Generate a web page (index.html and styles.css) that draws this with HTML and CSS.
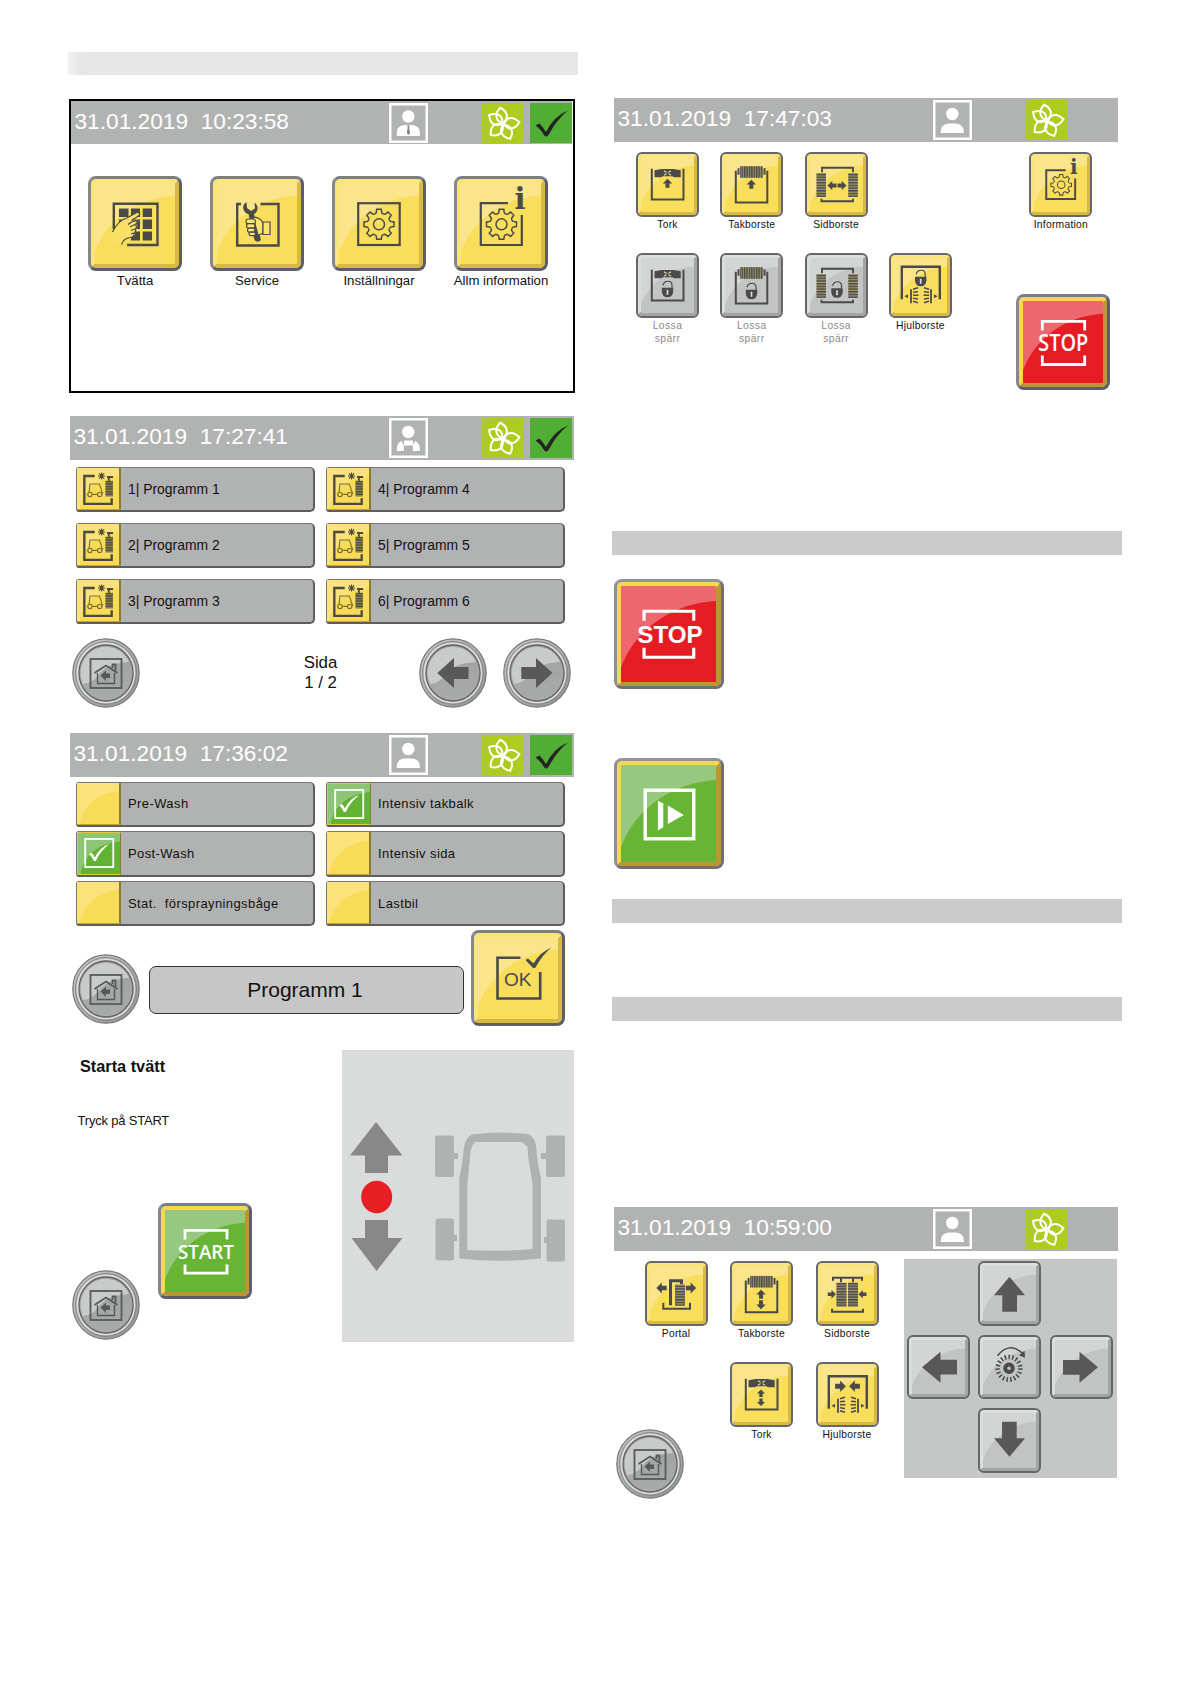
FILE: index.html
```html
<!DOCTYPE html>
<html lang="sv">
<head>
<meta charset="utf-8">
<title>Tvättanläggning</title>
<link rel="stylesheet" href="styles.css">
</head>
<body>
<svg class="defs" width="0" height="0" aria-hidden="true">
  <defs>
    <linearGradient id="ring" x1="0" y1="0" x2="1" y2="1">
      <stop offset="0" stop-color="#c9cac9"/><stop offset=".5" stop-color="#aeb0af"/><stop offset="1" stop-color="#8f9190"/>
    </linearGradient>
    <linearGradient id="disc" x1="0" y1="0" x2="0" y2="1">
      <stop offset="0" stop-color="#9fa19f"/><stop offset="1" stop-color="#a9abaa"/>
    </linearGradient>
    <pattern id="rows" width="10" height="2.700" patternUnits="userSpaceOnUse"><rect width="10" height="1.500" fill="#4a4a4a"/></pattern>
    <pattern id="cols" width="2.400" height="20" patternUnits="userSpaceOnUse"><rect width="1.350" height="20" fill="#4a4a4a"/></pattern>
  </defs>
  <symbol id="user" viewBox="0 0 39 40"><circle cx="19.300" cy="14" r="6.200" fill="#fff"/><path d="M7.800 33v-2q.5-7 8-7.500h7q7.500 .5 8 7.500v2z" fill="#fff"/></symbol>
  <symbol id="user-tie" viewBox="0 0 39 40"><circle cx="19.300" cy="13.500" r="6.200" fill="#fff"/><path d="M7.800 33v-3q0-7 7-8h9q7 1 7 8v3z" fill="#fff"/><path d="M18 22.500h2.800l-.7 2 1 5.500-1.600 2-1.700-2 .9-5.500z" fill="#858786"/></symbol>
  <symbol id="user-overall" viewBox="0 0 39 40"><circle cx="19.300" cy="14" r="6.200" fill="#fff"/><path d="M7.800 33v-3q.5-5 4.500-7l2.500 4v6zM30.800 33v-3q-.5-5-4.500-7l-2.500 4v6zM15 22.500h9v5h-9z" fill="#fff"/></symbol>
  <symbol id="petal" overflow="visible"><path d="M0-1C-8-5-6-12 0-16.500 6-12 8-5 0-1Z" fill="none" stroke="#fff" stroke-width="2"/></symbol>
  <symbol id="flower" viewBox="0 0 42 40">
    <g transform="translate(21 21)"><use href="#petal" transform="rotate(-10)"/><use href="#petal" transform="rotate(84)"/><use href="#petal" transform="rotate(154)"/><use href="#petal" transform="rotate(228)"/><use href="#petal" transform="rotate(303)"/><circle r="2.500" fill="#fff"/></g>
  </symbol>
  <symbol id="tick" viewBox="0 0 42 40"><path d="M5.500 22.500 9.500 20.500q3.500 3.500 6.500 8.500Q24 13 38 7.500 27 16 18.500 32q-2.500 3-4.500 0Q10 25.500 5.500 22.500Z" fill="#242424"/></symbol>
  <symbol id="program" viewBox="0 0 43 44"><g fill="none" stroke="#4a4a40" stroke-width="2.500"><path d="M18 8.500H7V38h29v-6"/><path d="M31 9.500h6.500M33 10v4" stroke-width="2"/><path d="M12 26l1-9h10l3.500 10.500M16 28h5" stroke="#77702f" stroke-width="1.200"/><g stroke="#77702f" stroke-width="1.300"><circle cx="13" cy="28" r="2.300"/><circle cx="23.300" cy="28" r="2.300"/></g><path d="M25.300 4.700v7.600M21.500 8.500h7.600M22.600 5.800l5.400 5.400M28 5.800l-5.400 5.400" stroke-width="1.200"/></g><path d="M29.500 13.500h7.800V30h-7.800z" fill="#8f8638"/><path d="M29.500 13.500h7.800V30h-7.800z" fill="url(#rows)"/></symbol>
  <symbol id="checked" viewBox="0 0 43 44"><rect x="6.500" y="6.500" width="30.500" height="30.500" fill="none" stroke="#fff" stroke-width="2"/><path d="M11 23l2.500-1.500q2 2 3.500 5Q23 15 33 12 23 19 18 30.500h-2Q14 26 11 23Z" fill="#fff"/></symbol>

  <symbol id="wash" viewBox="7 7 80 81"><path d="M25.800 53V27.800H69.500V69H39" fill="none" stroke="currentColor" stroke-width="2.400"/><path d="M31 32.500h9.500v8.500H31zM43 32.500h9v8.500h-9zM54.700 32.500H64v8.500h-9.300zM43 43.500h9V53h-9zM54.700 43.500H64V53h-9.300zM43 55.500h9v9h-9zM54.700 55.500H64v9h-9.300zM31 43.500h9V53h-9z" fill="currentColor"/><path d="M24.500 56Q30 44.500 39 42L46 38q4-2.500 5.500-1 1 2-2 3.500l-6 4 5.500 0q2 2-1 3.500 3 2 0 4.500 2 2-1 4 1 3-3 4.500-7-1-11 7.500L25 67Z" fill="#f9e168"/><path d="M24.500 56Q30 44.500 39 42L46 38q4-2.500 5.500-1 1 2-2 3.500l-6 4M40 48.500q5-4 9-3.500 1 2-2 3.500l-5 2.500M47 48.500q3 2 0 4.500l-4 1.500M47 53q2 2-1 4l-3 1M46 57q1 3-3 4.500-7 0-9.500 7" fill="none" stroke="currentColor" stroke-width="1.200"/></symbol>
  <symbol id="service" viewBox="7 7 80 81"><path d="M31 28H27.200V69.500H68.500V28H50.500" fill="none" stroke="currentColor" stroke-width="2.400"/><path d="M36.500 26q-4.500 3-3 7.500 1.500 4 5 4.500l6 26q3 3.500 6.500 0L44 38q4-2 3.500-7-.5-3-3-4.500l.5 6-4 2.500-4-3z" fill="currentColor"/><g fill="#fae36e" stroke="currentColor" stroke-width="1.200"><path d="M43 41q7 0 10 6v10q-3 2-5 2z"/><rect x="36" y="43" width="9.500" height="4.700" rx="2.300"/><rect x="36.500" y="47.700" width="8.500" height="4.500" rx="2.200"/><rect x="37.500" y="52.200" width="7.500" height="4" rx="2"/><rect x="39" y="56.200" width="6.500" height="3.500" rx="1.700"/><path d="M53 46h7v12.500h-7z"/></g></symbol>
  <symbol id="tooth" overflow="visible"><path d="M-4.400-10.500q1.500-.3 1.700-1.500l.4-3h4.600l.4 3q.2 1.200 1.700 1.500"/></symbol>
  <symbol id="gear" overflow="visible"><g fill="none" stroke="currentColor" stroke-width="1.500"><use href="#tooth"/><use href="#tooth" transform="rotate(45)"/><use href="#tooth" transform="rotate(90)"/><use href="#tooth" transform="rotate(135)"/><use href="#tooth" transform="rotate(180)"/><use href="#tooth" transform="rotate(225)"/><use href="#tooth" transform="rotate(270)"/><use href="#tooth" transform="rotate(315)"/><circle r="5.500"/></g></symbol>
  <symbol id="settings" viewBox="7 7 80 81"><rect x="26.200" y="27.200" width="41.500" height="41.800" fill="none" stroke="currentColor" stroke-width="2.200"/><use href="#gear" x="47" y="48.300"/></symbol>
  <symbol id="resume" viewBox="7 8 96 95"><rect x="31.500" y="32" width="49" height="49" fill="none" stroke="#fff" stroke-width="3.500"/><path d="M44.300 42.700 49.700 45.500V69.500L44.300 72.700ZM54.300 47.500 70.500 57 54.300 66Z" fill="#fff"/></symbol>

  <symbol id="arr" overflow="visible"><path d="M0-4.500 4.800.3H2V4.500H-2V.3H-4.800Z" fill="currentColor"/></symbol>
  <symbol id="blower" overflow="visible"><path d="M15.800 16.500V47.200H47.500V16.500" fill="none" stroke="currentColor" stroke-width="2"/><path d="M18.500 18l7-1.200h12L44.700 18v7h-6.500l-2-1H27l-2 1h-6.500z" fill="currentColor"/><path d="M28 18.500l7 4.500M35 18.500l-7 4.500" stroke="#e3d7a0" stroke-width="1.100"/><circle cx="31.500" cy="20.700" r="1.200" fill="#4a4a4a"/></symbol>
  <symbol id="roller" overflow="visible"><path d="M15.800 18.500V50.300H47.300V18.500M18.500 16v6.500M44.500 16v6.500" fill="none" stroke="currentColor" stroke-width="2"/><rect x="20" y="14" width="23" height="11.500" fill="#99916a"/><rect x="20" y="14" width="23" height="11.500" fill="url(#cols)"/></symbol>
  <symbol id="sides" overflow="visible"><path d="M17 20v-4.500H48V20M16.500 46.500v2.500H48v-2.500" fill="none" stroke="currentColor" stroke-width="1.900"/><path d="M11.500 20.700h9.500v24h-9.500zM43.300 20.700h9.500v24h-9.500z" fill="#a39a6c"/><path d="M11.500 20.700h9.500v24h-9.500zM43.300 20.700h9.500v24h-9.500z" fill="url(#rows)"/></symbol>
  <symbol id="lock" overflow="visible"><path d="M-4.500-6q1-4 5-4t4 4v3" fill="none" stroke="currentColor" stroke-width="1.200"/><path d="M-5.700-3.500H5.700V.5Q5 6 0 6T-5.700.5Z" fill="currentColor"/><path d="M0-1.500V3.500" stroke="#ddd" stroke-width="1.700"/></symbol>
  <symbol id="wheels" overflow="visible"><path d="M12.800 47V14.500H50.800V47" fill="none" stroke="currentColor" stroke-width="2.400"/><path d="M22 37v14M42 37v14" stroke="currentColor" stroke-width="1.800"/><path d="M24 37l5-1.500M24 40l5-.5M24 43l5.500 0M24 46l5 .8M24 49l5 1.500M40 37l-5-1.500M40 40l-5-.5M40 43l-5.500 0M40 46l-5 .8M40 49l-5 1.500" stroke="currentColor" stroke-width="1.500"/><path d="M15.500 44l3.500-2v4zM48.500 44l-3.500-2v4z" fill="currentColor"/></symbol>

  <symbol id="dry-up" viewBox="5 5 53 54"><use href="#blower"/><use href="#arr" x="31.500" y="31"/></symbol>
  <symbol id="roof-up" viewBox="5 5 53 54"><use href="#roller"/><use href="#arr" x="31.300" y="32"/></symbol>
  <symbol id="side-out" viewBox="5 5 53 54"><use href="#sides"/><use href="#arr" transform="translate(27 33.300) rotate(-90)"/><use href="#arr" transform="translate(37 33.300) rotate(90)"/></symbol>
  <symbol id="dry-lock" viewBox="5 5 53 54"><use href="#blower"/><use href="#lock" x="31.500" y="38"/></symbol>
  <symbol id="roof-lock" viewBox="5 5 53 54"><use href="#roller"/><use href="#lock" x="31.500" y="40"/></symbol>
  <symbol id="side-lock" viewBox="5 5 53 54"><use href="#sides"/><use href="#lock" x="32" y="38.500"/></symbol>
  <symbol id="wheel-lock" viewBox="5 5 53 54"><use href="#wheels" y="-1"/><use href="#lock" x="31.700" y="27"/></symbol>
  <symbol id="portal" viewBox="5 5 53 54"><use href="#arr" transform="translate(16.500 26.700) rotate(-90) scale(1.150)"/><use href="#arr" transform="translate(46 26.700) rotate(90) scale(1.150)"/><path d="M25.500 44V19.500H36.500V23" fill="none" stroke="currentColor" stroke-width="3"/><rect x="30" y="23.500" width="10" height="21" fill="#a39a6c"/><rect x="30" y="23.500" width="10" height="21" fill="url(#rows)"/><path d="M18.300 41.500V47.500H45V41.500" fill="none" stroke="currentColor" stroke-width="2"/></symbol>
  <symbol id="roof-move" viewBox="5 5 53 54"><use href="#roller" y=".7"/><use href="#arr" x="31" y="33"/><use href="#arr" transform="translate(31 43.500) rotate(180)"/></symbol>
  <symbol id="side-in" viewBox="5 5 53 54"><path d="M17 19.500V16.500H46V19.500M25 16.500V21M37 16.500V21M16 47.500V50.500H47V47.500" fill="none" stroke="currentColor" stroke-width="2"/><path d="M20.500 21.600h10v24h-10zM32 21.600h10v24h-10z" fill="#99916a"/><path d="M20.500 21.600h10v24h-10zM32 21.600h10v24h-10z" fill="url(#rows)"/><use href="#arr" transform="translate(15.800 33) rotate(90) scale(.9)"/><use href="#arr" transform="translate(46.500 33) rotate(-90) scale(.9)"/></symbol>
  <symbol id="dry-move" viewBox="5 5 53 54"><use href="#blower"/><use href="#arr" transform="translate(31 31) scale(.85)"/><use href="#arr" transform="translate(31 40) rotate(180) scale(.85)"/></symbol>
  <symbol id="wheel-move" viewBox="5 5 53 54"><use href="#wheels" y="-.5"/><use href="#arr" transform="translate(24.500 24) rotate(90) scale(1.200)"/><use href="#arr" transform="translate(38.500 24) rotate(-90) scale(1.200)"/></symbol>
  <symbol id="pad-arrow" viewBox="5 5 53 54"><path d="M31.500 15.500 47 34H39V50.500H24.300V34H16Z" fill="#585858"/></symbol>
  <symbol id="spin" viewBox="5 5 53 54"><path d="M19.500 20.500Q31 6 44.500 18" fill="none" stroke="currentColor" stroke-width="1.500"/><path d="M47 22.500l-6-2.500 5.500-4.500z" fill="currentColor"/><circle cx="31" cy="33" r="3.800" fill="none" stroke="currentColor" stroke-width="4"/><circle cx="31" cy="33" r="11.300" fill="none" stroke="currentColor" stroke-width="4.600" stroke-dasharray="1.500 2.237"/></symbol>

  <symbol id="round" viewBox="0 0 68 70" preserveAspectRatio="none"><ellipse cx="34" cy="35" rx="33.200" ry="34.200" fill="url(#ring)" stroke="#777978" stroke-width="1.200"/><ellipse cx="34" cy="35" rx="30.500" ry="31.500" fill="none" stroke="#858786" stroke-width="1"/><ellipse cx="34" cy="35" rx="28.500" ry="29.500" fill="none" stroke="#dedfde" stroke-width="1.500"/><ellipse cx="34" cy="35" rx="27" ry="28" fill="url(#disc)" stroke="#666" stroke-width="1.300"/><path d="M11 46A25.300 26.300 0 0 1 57 24Q34 25 26 38 20 45 11 46Z" fill="#c9cbca"/></symbol>
  <symbol id="home" viewBox="0 0 68 70"><use href="#round" width="68" height="70"/><g fill="none" stroke="#585a59" stroke-width="1.800"><rect x="18.500" y="21" width="31" height="29"/><path d="M22.500 35 34 27.500 45.500 35M40.500 30V26.500h3v6"/><path d="M25.500 35V45.500H42.500V35" stroke-width="1.400"/></g><path d="M28.500 37.500l5.500-5v3h4v4.500h-4v3z" fill="#585a59"/></symbol>
  <symbol id="prev" viewBox="0 0 68 70"><use href="#round" width="68" height="70"/><path d="M18.300 35 35 20V29H49.500V41H35V50Z" fill="#585858"/></symbol>
  <symbol id="next" viewBox="0 0 68 70"><use href="#round" width="68" height="70"/><path d="M49.500 35 33 20V29H18.300V41H33V50Z" fill="#585858"/></symbol>
</svg>

<main class="page">
  <div class="column">
    <div class="heading heading-light"></div>

    <section class="screen screen-menu">
      <header class="status"><time>31.01.2019  10:23:58</time><svg class="user"><use href="#user-tie"/></svg><svg class="eco"><use href="#flower"/></svg><svg class="ready"><use href="#tick"/></svg></header>
      <div class="menu">
        <div class="item"><div class="key key-lg"><svg><use href="#wash"/></svg></div>Tvätta</div>
        <div class="item"><div class="key key-lg"><svg><use href="#service"/></svg></div>Service</div>
        <div class="item"><div class="key key-lg"><svg><use href="#settings"/></svg></div>Inställningar</div>
        <div class="item"><div class="key key-lg"><svg viewBox="7 7 80 81"><path d="M54 27.200H26.800V69H67.800V39" fill="none" stroke="currentColor" stroke-width="2.200"/><use href="#gear" x="47.500" y="48.300"/><text class="info-i" x="66" y="33" text-anchor="middle">i</text></svg></div>Allm information</div>
      </div>
    </section>

    <section class="screen screen-programs">
      <header class="status"><time>31.01.2019  17:27:41</time><svg class="user"><use href="#user-overall"/></svg><svg class="eco"><use href="#flower"/></svg><svg class="ready"><use href="#tick"/></svg></header>
      <div class="rows rows-programs">
        <div class="row"><svg class="tile"><use href="#program"/></svg>1| Programm 1</div>
        <div class="row"><svg class="tile"><use href="#program"/></svg>4| Programm 4</div>
        <div class="row"><svg class="tile"><use href="#program"/></svg>2| Programm 2</div>
        <div class="row"><svg class="tile"><use href="#program"/></svg>5| Programm 5</div>
        <div class="row"><svg class="tile"><use href="#program"/></svg>3| Programm 3</div>
        <div class="row"><svg class="tile"><use href="#program"/></svg>6| Programm 6</div>
      </div>
      <footer class="pager">
        <svg class="round"><use href="#home"/></svg>
        <p class="page-no">Sida<br>1 / 2</p>
        <svg class="round"><use href="#prev"/></svg>
        <svg class="round"><use href="#next"/></svg>
      </footer>
    </section>

    <section class="screen screen-options">
      <header class="status"><time>31.01.2019  17:36:02</time><svg class="user"><use href="#user"/></svg><svg class="eco"><use href="#flower"/></svg><svg class="ready"><use href="#tick"/></svg></header>
      <div class="rows rows-options">
        <div class="row"><span class="tile"></span>Pre-Wash</div>
        <div class="row"><svg class="tile tile-on"><use href="#checked"/></svg>Intensiv takbalk</div>
        <div class="row"><svg class="tile tile-on"><use href="#checked"/></svg>Post-Wash</div>
        <div class="row"><span class="tile"></span>Intensiv sida</div>
        <div class="row"><span class="tile"></span>Stat.&nbsp; försprayningsbåge</div>
        <div class="row"><span class="tile"></span>Lastbil</div>
      </div>
      <footer class="confirm">
        <svg class="round"><use href="#home"/></svg>
        <div class="field">Programm 1</div>
        <div class="key key-lg key-tall"><svg viewBox="7 7 80 82"><path d="M49.500 27.800H26.500V68.500H69.200V42" fill="none" stroke="currentColor" stroke-width="2.600"/><path d="M54.500 30l2.500-1.500 5.500 5q6-11 18-16-9 7-16 20-1.500 1-3 0z" fill="currentColor"/><text class="ok-text" x="46.700" y="55.800" text-anchor="middle">OK</text></svg></div>
      </footer>
    </section>

    <section class="screen-start">
      <div class="start-side">
        <h2>Starta tvätt</h2>
        <p>Tryck på START</p>
        <div class="start-actions">
          <svg class="round"><use href="#home"/></svg>
          <div class="key key-lg key-tall key-green"><svg viewBox="7 7 80 82"><path d="M27 36.500V27.300H69V36.500M27 61.500v8.700H69v-8.700" fill="none" stroke="#fff" stroke-width="2.800"/><text class="start-text" x="20" y="56" textLength="56" lengthAdjust="spacingAndGlyphs">START</text></svg></div>
        </div>
      </div>
      <svg class="vehicle" viewBox="0 0 232 292">
        <path d="M34 72 60.500 105.500H46V123H23V105.500H8Z" fill="#888"/>
        <path d="M34.500 221 9.500 188H23V170H46V188H60.500Z" fill="#888"/>
        <ellipse cx="34.700" cy="147" rx="15.500" ry="16.300" fill="#e81e25"/>
        <g fill="#b0b2b1"><rect x="93" y="85.500" width="19" height="41.500" rx="2.500"/><rect x="204" y="85.500" width="19" height="41.500" rx="2.500"/><rect x="93.500" y="168.500" width="18.500" height="42" rx="2.500"/><rect x="204.500" y="169.500" width="18.500" height="42" rx="2.500"/><path d="M112 103h4v6h-4zM199 103h5v6h-5zM112 185h3v6h-3zM202 187h3v6h-3z"/></g>
        <path d="M117.300 208.500V128q3.500-17 4.500-30 1.500-10 8-13.500Q158 81 186 84q6.500 3 8 11 1 18 5 33v80.500Q158 213 117.300 208.500Z" fill="#b0b2b1"/>
        <path d="M125.300 200V136l3-33q1-8 5-11H180l5.500 5 .5 9 4.500 28V199Q158 202 125.300 200Z" fill="#dadcdb"/>
      </svg>
    </section>
  </div>

  <div class="column">
    <section class="screen screen-stop">
      <header class="status"><time>31.01.2019  17:47:03</time><svg class="user"><use href="#user"/></svg><svg class="eco"><use href="#flower"/></svg></header>
      <div class="release">
        <div class="release-keys">
          <div class="item"><div class="key"><svg><use href="#dry-up"/></svg></div>Tork</div>
          <div class="item"><div class="key"><svg><use href="#roof-up"/></svg></div>Takborste</div>
          <div class="item"><div class="key"><svg><use href="#side-out"/></svg></div>Sidborste</div>
          <div></div>
          <div class="item item-off"><div class="key key-gray"><svg><use href="#dry-lock"/></svg></div>Lossa<br>spärr</div>
          <div class="item item-off"><div class="key key-gray"><svg><use href="#roof-lock"/></svg></div>Lossa<br>spärr</div>
          <div class="item item-off"><div class="key key-gray"><svg><use href="#side-lock"/></svg></div>Lossa<br>spärr</div>
          <div class="item"><div class="key"><svg><use href="#wheel-lock"/></svg></div>Hjulborste</div>
        </div>
        <div class="release-side">
          <div class="item"><div class="key"><svg viewBox="8 8 77 79"><path d="M54 27.200H25.800V69H67.800V39" fill="none" stroke="currentColor" stroke-width="2.800"/><use href="#gear" x="47.500" y="48.300"/><text class="info-i" x="66" y="33" text-anchor="middle">i</text></svg></div>Information</div>
          <div class="key key-lg key-tall key-red"><svg viewBox="7 7 80 82"><path d="M26.300 36.500V27.300H68.700V36.500M26.300 61.500v9H68.700v-9" fill="none" stroke="#fff" stroke-width="2.800"/><text class="stop-text" x="22.300" y="57" textLength="50" lengthAdjust="spacingAndGlyphs">STOP</text></svg></div>
        </div>
      </div>
    </section>

    <div class="heading heading-stop"></div>
    <div class="key key-xl key-red"><svg viewBox="7 8 96 95"><path d="M30.300 42V32.500H80.500V42M30.300 69.500v9.500H80.500v-9.500" fill="none" stroke="#fff" stroke-width="3.200"/><text class="stop-lg-text" x="23.500" y="64.500" textLength="66" lengthAdjust="spacingAndGlyphs">STOP</text></svg></div>
    <div class="key key-xl key-green key-resume"><svg><use href="#resume"/></svg></div>
    <div class="heading heading-second"></div>
    <div class="heading heading-third"></div>

    <section class="screen screen-manual">
      <header class="status"><time>31.01.2019  10:59:00</time><svg class="user"><use href="#user"/></svg><svg class="eco"><use href="#flower"/></svg></header>
      <div class="manual">
        <div class="manual-side">
          <div class="manual-keys">
            <div class="item"><div class="key"><svg><use href="#portal"/></svg></div>Portal</div>
            <div class="item"><div class="key"><svg><use href="#roof-move"/></svg></div>Takborste</div>
            <div class="item"><div class="key"><svg><use href="#side-in"/></svg></div>Sidborste</div>
            <div></div>
            <div class="item"><div class="key"><svg><use href="#dry-move"/></svg></div>Tork</div>
            <div class="item"><div class="key"><svg><use href="#wheel-move"/></svg></div>Hjulborste</div>
          </div>
          <svg class="round"><use href="#home"/></svg>
        </div>
        <div class="pad">
          <div class="key key-gray pad-up"><svg><use href="#pad-arrow"/></svg></div>
          <div class="key key-gray pad-left"><svg><use href="#pad-arrow"/></svg></div>
          <div class="key key-gray pad-mid"><svg><use href="#spin"/></svg></div>
          <div class="key key-gray pad-right"><svg><use href="#pad-arrow"/></svg></div>
          <div class="key key-gray pad-down"><svg><use href="#pad-arrow"/></svg></div>
        </div>
      </div>
    </section>
  </div>
</main>
</body>
</html>
```
FILE: styles.css
```css
* { box-sizing: border-box; }
body { margin: 0; background: #fff; color: #111; font-family: "Liberation Sans", Arial, sans-serif; }
svg { display: block; }
.defs { height: 0; }
h2, p { margin: 0; }

.page { display: grid; grid-template-columns: 504px 504px; column-gap: 40px; height: 1684px; padding-left: 70px; overflow: hidden; }
.column { min-width: 0; }

.heading { width: 510px; height: 24px; margin-left: -2px; background: #cbcbcb; }
.heading-light { height: 23px; margin-top: 52px; background: linear-gradient(90deg, #f1f1f1, #e6e6e6 14px); }
.heading-stop { margin-bottom: 24px; }
.heading-second { margin-top: 30px; }
.heading-third { margin-top: 74px; }

/* status bar */
.status { display: grid; grid-template-columns: 319px 93px 48px 42px; align-items: center; height: 44px; background: #b1b3b2; }
.status time { padding: 0 0 4px 3.500px; color: #fff; font-size: 22.700px; line-height: 30px; white-space: pre; }
.user { width: 39px; height: 40px; box-shadow: inset 0 0 0 2.500px #fff; }
.eco, .ready { width: 42px; height: 40px; }
.eco { background: #aecb1f; }
.ready { background: #4fae33; }

/* glossy keys */
.key {
  --hi: #fae58a; --base: #f8de5a; --edge: #f9e57a; --shade: #d9b845;
  width: 63px; height: 64.500px; padding: 3px; border: 2px solid #66676a; border-radius: 6px; color: #4a4a4a;
  background:
    radial-gradient(ellipse 112% 101% at 106% 116%, var(--base) 99%, var(--hi) 100%) content-box,
    linear-gradient(135deg, var(--edge) 50%, var(--shade) 50%) padding-box;
}
.key svg { width: 100%; height: 100%; }
.key-lg { width: 94px; height: 95px; padding: 4px; border: 3px solid; border-color: #7b7d84 #5d5f66 #5d5f66 #85878b; border-radius: 8px; }
.key-tall { height: 96px; }
.key-xl { width: 110px; height: 110px; padding: 4px 5px 4px 4px; border: 3px solid; border-color: #939393 #707070 #707070 #8f8f8f; border-radius: 8px; }
.key-red { --hi: #ec686e; --base: #e61c24; --edge: #f5d84f; --shade: #bd9632; }
.key-green { --hi: #96c880; --base: #68b535; --edge: #f5d84f; --shade: #bd9632; }
.key-gray { --hi: #d3d4d4; --base: #c2c4c3; --edge: #dcdddd; --shade: #a3a4a4; }
.key-resume { height: 111px; margin-top: 69px; }
.info-i { font: bold 29px "DejaVu Serif", serif; fill: currentColor; }
.ok-text { font: 19px "Liberation Sans", sans-serif; fill: currentColor; }
.start-text { font: 600 20.500px "Open Sans", sans-serif; fill: #fff; }
.stop-text { font: 600 22.500px "Open Sans", sans-serif; fill: #fff; }
.stop-lg-text { font: bold 23.500px "Liberation Sans", sans-serif; fill: #fff; }

.item { display: flex; flex-direction: column; align-items: center; width: 63px; font-size: 10.300px; line-height: 13px; letter-spacing: .25px; text-align: center; white-space: nowrap; }
.item .key { flex: none; margin-bottom: 1.500px; }
.item-off { color: #8b8b8b; letter-spacing: .45px; }

.round { flex: none; width: 68px; height: 70px; }

/* main menu */
.screen-menu { width: 506px; height: 294px; margin: 24px 0 0 -1px; border: 2px solid #000; }
.screen-menu .status { height: 43px; margin-right: 1px; grid-template-columns: 318px 93px 48px 42px; }
.menu { display: flex; gap: 28px; padding: 32px 0 0 17px; }
.menu .item { width: 94px; font-size: 13.200px; line-height: 16px; letter-spacing: 0; }
.menu .key { margin-bottom: 2px; }

/* lists */
.screen-programs { height: 291px; margin-top: 23px; }
.rows { display: grid; grid-template-columns: 239px 239px; grid-auto-rows: 45.500px; column-gap: 11px; padding-left: 6px; }
.rows-programs { row-gap: 10.700px; padding-top: 6.500px; font-size: 13.900px; }
.rows-options { row-gap: 4.200px; padding-top: 4.500px; font-size: 13px; letter-spacing: .4px; }
.row { display: flex; align-items: center; gap: 7px; border: 1px solid #777; border-right: 2px solid #5e5e5e; border-bottom: 2px solid #5e5e5e; border-radius: 3px 5px 5px 3px; background: #b1b3b2; white-space: nowrap; }
.tile { width: 44px; height: 100%; border-right: 2px solid #8c7a2c; border-bottom: 1.500px solid #c7a233; background: radial-gradient(ellipse 100% 90% at 105% 110%, #f8dc58 99%, #fbe27a 100%); }
.tile-on { border: 1.500px solid #e0c83d; border-right-color: #8c7a2c; background: radial-gradient(ellipse 100% 90% at 105% 110%, #62b334 99%, #8cc574 100%); }

.pager { display: flex; align-items: center; margin-top: 13.500px; padding: 0 3px 0 2px; }
.page-no { flex: 1; padding-left: 82px; font-size: 16.800px; line-height: 20px; text-align: center; }
.page-no + .round { margin-right: 16px; }

.screen-options { height: 293px; margin-top: 26px; }
.confirm { display: flex; align-items: flex-end; margin-top: 4px; padding-left: 2px; }
.confirm .round { margin-bottom: 2px; }
.field { width: 315px; height: 48px; margin: 0 7px 12px 9px; padding-right: 3px; border: 1.500px solid #333; border-radius: 7px; background: #c6c6c6; font-size: 21px; line-height: 45px; text-align: center; }

/* start screen */
.screen-start { display: flex; height: 292px; margin-top: 24px; }
.start-side { width: 272px; }
.start-side h2 { padding: 6px 0 0 10px; font-size: 16.300px; line-height: 20px; }
.start-side p { padding: 37px 0 0 7.500px; font-size: 13px; line-height: 16px; letter-spacing: -.2px; }
.start-actions { display: flex; gap: 18px; margin-top: 74px; padding-left: 2px; }
.start-actions .round { margin-top: 67px; }
.vehicle { width: 232px; height: 292px; background: #dadcdb; }

/* stop screen */
.screen-stop { height: 531px; padding-top: 98px; }
.release { display: flex; padding: 10px 0 0 22px; }
.release-keys { display: grid; grid-template-columns: repeat(4, 63px); grid-template-rows: 101px auto; column-gap: 21.300px; align-content: start; }
.release-side { display: flex; flex-direction: column; align-items: center; margin-left: 64px; }
.release-side .item { height: 142px; margin-right: 4px; }

/* manual control */
.screen-manual { margin-top: 186px; }
.manual { display: flex; padding-top: 8px; }
.manual-side { width: 290px; }
.manual-keys { display: grid; grid-template-columns: repeat(3, 63px); grid-template-rows: 101px 101px; column-gap: 22.500px; padding: 2px 0 0 30.500px; }
.manual-side .round { margin: -34px 0 0 2px; }
.pad { display: grid; grid-template-columns: repeat(3, 63px); grid-template-rows: repeat(3, 64.500px); grid-template-areas: ". up ." "left mid right" ". down ."; gap: 9px 8.700px; width: 213px; height: 219px; padding: 2px 0 0 2.500px; background: #c5c7c6; }
.pad-up { grid-area: up; }
.pad-left { grid-area: left; }
.pad-mid { grid-area: mid; }
.pad-right { grid-area: right; }
.pad-down { grid-area: down; }
.pad-left svg { transform: rotate(-90deg); }
.pad-right svg { transform: rotate(90deg); }
.pad-down svg { transform: rotate(180deg); }
```
